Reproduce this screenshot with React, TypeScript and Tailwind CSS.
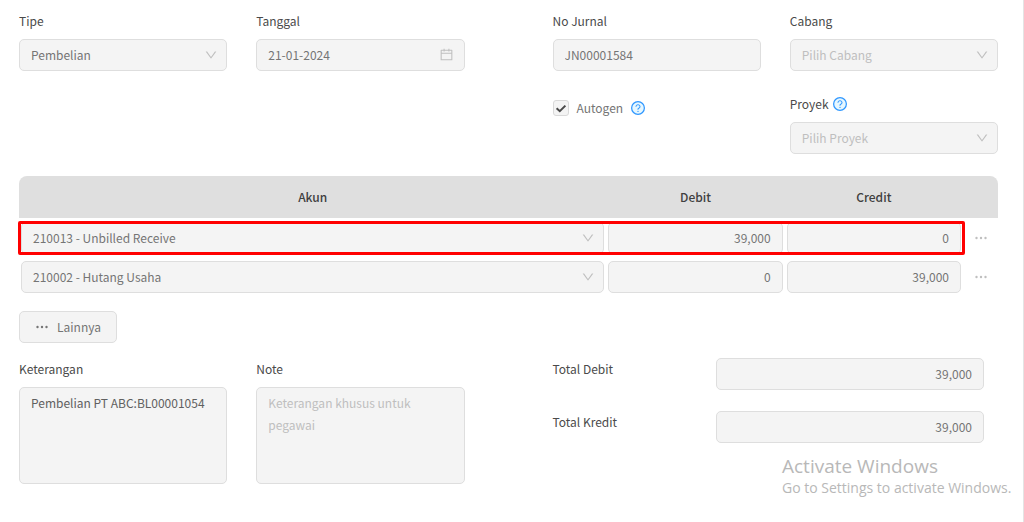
import { useState, type ReactNode } from 'react'
import { clsx } from 'clsx'
import { AiOutlineCalendar, AiOutlineDown } from 'react-icons/ai'

const box =
  'block w-full rounded-[5px] border border-[#dedede] bg-[#f4f4f4] text-[12px] opacity-100 outline-none placeholder:text-[#bfbfbf]'

function Label({ htmlFor, children }: { htmlFor: string; children: ReactNode }) {
  return (
    <label htmlFor={htmlFor} className="block leading-[22px] text-[#4a4a4a]">
      {children}
    </label>
  )
}

function HelpIcon() {
  return (
    <svg viewBox="64 64 896 896" aria-hidden className="size-[14px] shrink-0 text-[#2f97ff]">
      <circle cx="512" cy="512" r="408" fill="#e6f7ff" stroke="currentColor" strokeWidth="80" />
      <path
        fill="currentColor"
        d="M623.6 316.7C593.6 290.4 554 276 512 276s-81.6 14.5-111.6 40.7C369.2 344 352 380.7 352 420v7.6c0 4.4 3.6 8 8 8h48c4.4 0 8-3.6 8-8V420c0-44.1 43.1-80 96-80s96 35.9 96 80c0 31.1-22 59.6-56.1 72.7-21.2 8.1-39.2 22.3-52.1 40.9-13.1 19-19.9 41.8-19.9 64.9V620c0 4.4 3.6 8 8 8h48c4.4 0 8-3.6 8-8v-22.7a48.3 48.3 0 0 1 30.9-44.8c59-22.7 97.1-74.7 97.1-132.5.1-39.3-17.1-76-48.3-103.3zM472 732a40 40 0 1 0 80 0 40 40 0 1 0-80 0z"
      />
    </svg>
  )
}

function Dots() {
  return (
    <svg viewBox="0 0 14 14" aria-hidden fill="currentColor" className="size-[14px] shrink-0">
      <circle cx="2.5" cy="7" r="1.2" />
      <circle cx="7" cy="7" r="1.2" />
      <circle cx="11.5" cy="7" r="1.2" />
    </svg>
  )
}

function SelectBox(props: {
  id?: string
  label?: string
  value?: string
  placeholder?: string
}) {
  return (
    <div className="relative">
      <select
        id={props.id}
        aria-label={props.label}
        disabled
        className={clsx(
          box,
          'h-8 appearance-none pr-8 pl-[11px]',
          props.value ? 'text-[#757575]' : 'text-[#bfbfbf]',
        )}
      >
        <option>{props.value ?? props.placeholder}</option>
      </select>
      <AiOutlineDown
        aria-hidden
        className="pointer-events-none absolute top-[9px] right-[9px] size-[14px] text-[#bfbfbf]"
      />
    </div>
  )
}

function TextBox(props: { id?: string; label?: string; value: string; numeric?: boolean }) {
  return (
    <input
      id={props.id}
      aria-label={props.label}
      type="text"
      disabled
      value={props.value}
      readOnly
      className={clsx(box, 'h-8 px-[11px] pb-[2px] text-[#757575]', props.numeric && 'text-right')}
    />
  )
}

function Field(props: { id: string; label: string; children: ReactNode }) {
  return (
    <div>
      <Label htmlFor={props.id}>{props.label}</Label>
      <div className="mt-[7px]">{props.children}</div>
    </div>
  )
}

const rows = [
  { account: '210013 - Unbilled Receive', debit: '39,000', credit: '0' },
  { account: '210002 - Hutang Usaha', debit: '0', credit: '39,000' },
]

function EntryTable() {
  return (
    <div className="relative mt-[22px]">
      <table className="w-full table-fixed border-separate border-spacing-0">
        <colgroup>
          <col className="w-[60%]" />
          <col />
          <col />
          <col className="w-[35px]" />
        </colgroup>
        <thead>
          <tr className="h-[42px] text-[#404040] [&>th]:bg-[#dfdfdf] [&>th]:font-medium">
            <th className="rounded-tl-lg">Akun</th>
            <th>Debit</th>
            <th>Credit</th>
            <th className="rounded-tr-lg" aria-label="Aksi" />
          </tr>
        </thead>
        <tbody>
          {rows.map((row) => (
            <tr key={row.account} className="[&>td]:px-[2px] [&>td]:pt-1 [&>td]:pb-[3px]">
              <td>
                <SelectBox label="Akun" value={row.account} />
              </td>
              <td>
                <TextBox label="Debit" value={row.debit} numeric />
              </td>
              <td>
                <TextBox label="Credit" value={row.credit} numeric />
              </td>
              <td>
                <button
                  type="button"
                  aria-label="Opsi baris"
                  className="flex h-8 w-full items-center justify-center text-[#bfbfbf]"
                >
                  <Dots />
                </button>
              </td>
            </tr>
          ))}
        </tbody>
      </table>
      <div className="pointer-events-none absolute top-[45px] right-[33px] -left-px h-[34px] rounded-[2px] border-3 border-[#ff0000]" />
    </div>
  )
}

export default function App() {
  const [autogen, setAutogen] = useState(true)

  return (
    <main className="relative min-h-screen border-r border-[#e4e4e4] bg-white pt-[10px] pr-[25px] pb-[38px] pl-[19px] font-['Noto_Sans_CJK_SC','Noto_Sans',sans-serif] text-[12px] leading-[22px]">
      <div className="grid grid-cols-2 gap-x-[88px]">
        <div className="grid grid-cols-2 content-start gap-x-[29px]">
          <Field id="tipe" label="Tipe">
            <SelectBox id="tipe" value="Pembelian" />
          </Field>
          <Field id="tanggal" label="Tanggal">
            <div className="relative">
              <TextBox id="tanggal" value="21-01-2024" />
              <AiOutlineCalendar
                aria-hidden
                className="absolute top-2 right-[11px] size-[15px] text-[#bfbfbf]"
              />
            </div>
          </Field>
        </div>
        <div className="grid grid-cols-2 gap-x-[29px] gap-y-[22px]">
          <Field id="jurnal" label="No Jurnal">
            <TextBox id="jurnal" value="JN00001584" />
          </Field>
          <Field id="cabang" label="Cabang">
            <SelectBox id="cabang" placeholder="Pilih Cabang" />
          </Field>
          <div className="flex h-[30px] items-center gap-2">
            <label className="flex items-center gap-2 text-[#757575]">
              <span className="relative size-4">
                <input
                  type="checkbox"
                  checked={autogen}
                  onChange={(e) => setAutogen(e.target.checked)}
                  className="peer block size-4 appearance-none rounded-[3px] border border-[#d9d9d9] bg-[#f4f4f4]"
                />
                <svg
                  viewBox="0 0 16 16"
                  fill="none"
                  stroke="#4a4a4a"
                  strokeWidth="2"
                  className="pointer-events-none absolute inset-0 hidden size-4 peer-checked:block"
                >
                  <path d="M3.6 8.2 L6.8 11.2 L12.4 5.6" />
                </svg>
              </span>
              Autogen
            </label>
            <HelpIcon />
          </div>
          <div>
            <div className="flex items-center gap-1">
              <Label htmlFor="proyek">Proyek</Label>
              <HelpIcon />
            </div>
            <div className="mt-[7px]">
              <SelectBox id="proyek" placeholder="Pilih Proyek" />
            </div>
          </div>
        </div>
      </div>

      <EntryTable />

      <button
        type="button"
        className="mt-[15px] flex h-8 items-center gap-2 rounded-[5px] border border-[#dedede] bg-[#f4f4f4] px-[15px] text-[#757575]"
      >
        <Dots />
        Lainnya
      </button>

      <div className="mt-[15px] grid grid-cols-2 gap-x-[88px]">
        <div className="grid grid-cols-2 gap-x-[29px]">
          <Field id="keterangan" label="Keterangan">
            <textarea
              id="keterangan"
              disabled
              defaultValue="Pembelian PT ABC:BL00001054"
              className={clsx(box, 'h-[97px] resize-none px-[11px] py-[4px] leading-[22px] text-[#606060]')}
            />
          </Field>
          <Field id="note" label="Note">
            <textarea
              id="note"
              disabled
              placeholder="Keterangan khusus untuk pegawai"
              className={clsx(box, 'h-[97px] resize-none px-[11px] py-[4px] leading-[22px]')}
            />
          </Field>
        </div>
        <div className="flex flex-col gap-[21px] pr-[14px]">
          {[
            { id: 'debit', label: 'Total Debit' },
            { id: 'kredit', label: 'Total Kredit' },
          ].map((total) => (
            <div key={total.id} className="grid grid-cols-[38fr_62fr]">
              <Label htmlFor={total.id}>{total.label}</Label>
              <TextBox id={total.id} value="39,000" numeric />
            </div>
          ))}
        </div>
      </div>

      <aside className="pointer-events-none absolute right-2 bottom-6 w-[233px] font-['Open_Sans',sans-serif] text-[#b8b8b8]">
        <p className="text-[19px] leading-6">Activate Windows</p>
        <p className="text-[14px] leading-5">Go to Settings to activate Windows.</p>
      </aside>
    </main>
  )
}
